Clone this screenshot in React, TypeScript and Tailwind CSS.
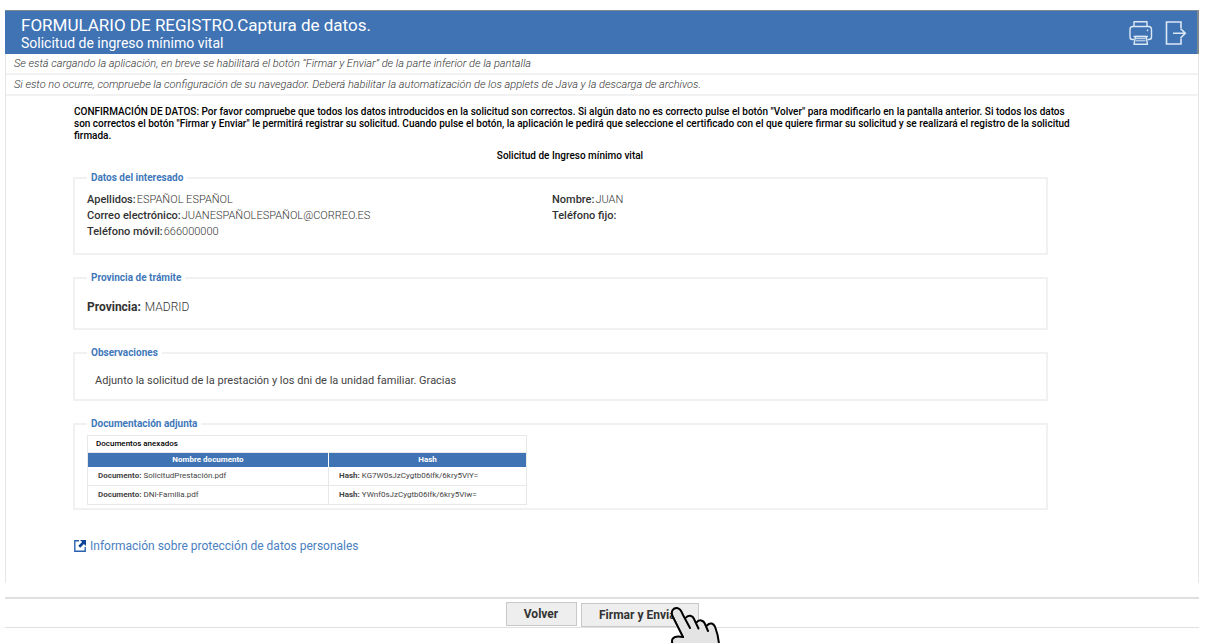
import type { ReactNode } from "react"

const notices = [
  "Se está cargando la aplicación, en breve se habilitará el botón “Firmar y Enviar” de la parte inferior de la pantalla",
  "Si esto no ocurre, compruebe la configuración de su navegador. Deberá habilitar la automatización de los applets de Java y la descarga de archivos.",
]

const applicant = [
  { label: "Apellidos:", value: "ESPAÑOL ESPAÑOL" },
  { label: "Nombre:", value: "JUAN" },
  { label: "Correo electrónico:", value: "JUANESPAÑOLESPAÑOL@CORREO.ES" },
  { label: "Teléfono fijo:", value: "" },
  { label: "Teléfono móvil:", value: "666000000" },
]

const documents = [
  { name: "SolicitudPrestación.pdf", hash: "KG7W0sJzCygtb06lfk/6kry5ViY=" },
  { name: "DNI-Familia.pdf", hash: "YWnf0sJzCygtb06lfk/6kry5Viw=" },
]

function PrinterIcon() {
  return (
    <svg viewBox="0 0 24 24" className="h-6 w-6" fill="none" stroke="#dce8f6" strokeWidth="1.4" strokeLinejoin="round">
      <path d="M5 5.5V0.8H18V5.5" />
      <path d="M5 18.5H3.2Q1 18.5 1 16V8.5Q1 5.5 4 5.5H19.5Q22.5 5.5 22.5 8.5V16Q22.5 18.5 20 18.5H18.5" />
      <path d="M6.5 15.5H17L18.5 23.3H5Z" />
      <path d="M7 17.7H16.5M7 19.8H16.5" strokeWidth="1" />
      <path d="M4.5 15.5H19" />
      <circle cx="18.5" cy="9.3" r="0.6" fill="#dce8f6" strokeWidth="0.6" />
    </svg>
  )
}

function ExitIcon() {
  return (
    <svg viewBox="0 0 22 24" className="h-6 w-[22px]" fill="none" stroke="#dce8f6" strokeWidth="1.6">
      <path d="M16 7V1H1.5V23H16V17.5" />
      <path d="M8 12.2H20M15.5 7.5L20.3 12.2L15.5 17" />
    </svg>
  )
}

function OpenIcon() {
  return (
    <svg viewBox="0 0 12 12" className="h-3 w-3" fill="none">
      <path d="M5 0.8H0.8V11.2H11.2V7" stroke="#2a62ad" strokeWidth="1.4" />
      <path d="M6 0H12V6L9.9 3.9L6.2 7.7L4.3 5.8L8.1 2.1Z" fill="#0b4499" />
    </svg>
  )
}

function HandPointer() {
  return (
    <svg
      viewBox="0 0 50 37"
      className="pointer-events-none absolute top-1 left-[90px] h-[37px] w-[50px]"
      fill="#e4e4e4"
      stroke="#000"
      strokeWidth="2"
      strokeLinecap="round"
      strokeLinejoin="round"
      aria-hidden="true"
    >
      <path
        stroke="none"
        d="M1 38V33Q3 30 11 31L1.5 9C0 4 3 1.5 6 2C9 2.5 10 4 11.5 8L14 12C17 8.5 21 9 23 14L25.5 16.5C28 13 32 14 34 18.5C38 16 42 17 44 21.5C46 26 48 31 48 38Z"
      />
      <path d="M12 31L1.5 10C-0.5 5 2.5 1.7 6 2C9 2.5 10.3 4.5 11.5 8L19 22" />
      <path d="M14.5 12C17 8.5 21.5 9 23 13L27.5 22.5" />
      <path d="M25.5 16.5C28 13 32.5 14 34 18L37 25" />
      <path d="M36 19.5C39 16 42.5 17 44.3 21.5C46 26 47.5 31 48 38" />
      <path d="M12 31C7 30 3 30.5 1.5 33Q0.5 35 1.5 38" />
    </svg>
  )
}

function Panel({ title, children }: { title: string; children: ReactNode }) {
  return (
    <fieldset className="border-2 border-[#f1f1f1]">
      <legend className="ml-3 px-1 text-[10px] leading-4 font-bold text-[#3f78ba]">{title}</legend>
      {children}
    </fieldset>
  )
}

export default function App() {
  return (
    <div className="flex min-h-screen flex-col overflow-hidden bg-white pt-[10px] pr-3 pl-[5px] font-[Roboto,sans-serif] text-[#333]">
      <header className="flex h-11 items-center justify-between border-t border-r-2 border-[#808890] bg-[#3f73b4] pr-[10px] pl-4 text-white">
        <div>
          <h1 className="text-[17px] leading-5">FORMULARIO DE REGISTRO.Captura de datos.</h1>
          <p className="text-sm leading-4">Solicitud de ingreso mínimo vital</p>
        </div>
        <div className="flex items-center gap-3">
          <button type="button" aria-label="Imprimir">
            <PrinterIcon />
          </button>
          <button type="button" aria-label="Salir">
            <ExitIcon />
          </button>
        </div>
      </header>

      <main className="border-x border-[#e6e6e6] pb-6">
        {notices.map((notice) => (
          <p key={notice} className="border-b-2 border-[#f2f2f2] pl-2 text-[11px] leading-[19px] font-light italic">
            {notice}
          </p>
        ))}

        <div className="mr-[124px] ml-[68px] pt-[10px]">
          <p className="text-[10px] leading-3 font-medium text-black">
            CONFIRMACIÓN DE DATOS: Por favor compruebe que todos los datos introducidos en la solicitud son correctos. Si
            algún dato no es correcto pulse el botón "Volver" para modificarlo en la pantalla anterior. Si todos los datos
            son correctos el botón "Firmar y Enviar" le permitirá registrar su solicitud. Cuando pulse el botón, la
            aplicación le pedirá que seleccione el certificado con el que quiere firmar su solicitud y se realizará el
            registro de la solicitud firmada.
          </p>
          <h2 className="mt-[6px] mr-2 text-center text-[10px] leading-4 font-medium text-black">
            Solicitud de Ingreso mínimo vital
          </h2>

          <div className="mt-[6px] mr-[26px] -ml-px flex flex-col gap-[15px]">
            <Panel title="Datos del interesado">
              <dl className="grid grid-cols-[465px_1fr] px-3 pt-[6px] pb-[13px] text-[11px] leading-4">
                {applicant.map((field) => (
                  <div key={field.label} className="flex gap-px">
                    <dt className="font-medium">{field.label}</dt>
                    <dd className="font-light">{field.value}</dd>
                  </div>
                ))}
              </dl>
            </Panel>

            <Panel title="Provincia de trámite">
              <dl className="flex gap-1 px-3 py-3 text-xs leading-[18px]">
                <dt className="font-bold">Provincia:</dt>
                <dd className="font-light">MADRID</dd>
              </dl>
            </Panel>

            <Panel title="Observaciones">
              <p className="px-5 pt-3 pb-[10px] text-[11px] leading-4 text-[#444]">
                Adjunto la solicitud de la prestación y los dni de la unidad familiar. Gracias
              </p>
            </Panel>

            <Panel title="Documentación adjunta">
              <table className="mx-3 mt-[3px] mb-[3px] w-[440px] table-fixed border-collapse border border-[#e8e8e8] text-[8px] leading-4 text-[#444]">
                <caption className="border border-b-0 border-[#e8e8e8] pl-2 text-left font-medium text-black">
                  Documentos anexados
                </caption>
                <thead>
                  <tr className="bg-[#3f73b4] leading-[14px] text-white">
                    <th className="w-[241px] border-r border-white">Nombre documento</th>
                    <th>Hash</th>
                  </tr>
                </thead>
                <tbody>
                  {documents.map((doc) => (
                    <tr key={doc.name} className="border-b border-[#e8e8e8]">
                      <td className="border-r border-[#e8e8e8] px-[10px] py-px">
                        <b>Documento:</b> {doc.name}
                      </td>
                      <td className="px-[10px] py-px">
                        <b>Hash:</b> {doc.hash}
                      </td>
                    </tr>
                  ))}
                </tbody>
              </table>
            </Panel>
          </div>

          <a href="#proteccion" className="mt-[26px] inline-flex items-center gap-1 text-xs leading-5 text-[#4a80bf]">
            <OpenIcon />
            Información sobre protección de datos personales
          </a>
        </div>
      </main>

      <footer className="mt-[14px] mb-3 flex justify-center gap-1 border-t-2 border-b border-[#e0e0e0] pt-[3px]">
        <button type="button" className="h-6 w-[71px] border border-[#c8c8c8] bg-[#eee] text-xs font-bold">
          Volver
        </button>
        <div className="relative">
          <button type="button" className="h-6 w-[118px] border border-[#c8c8c8] bg-[#eee] text-xs font-bold">
            Firmar y Enviar
          </button>
          <HandPointer />
        </div>
      </footer>
    </div>
  )
}
